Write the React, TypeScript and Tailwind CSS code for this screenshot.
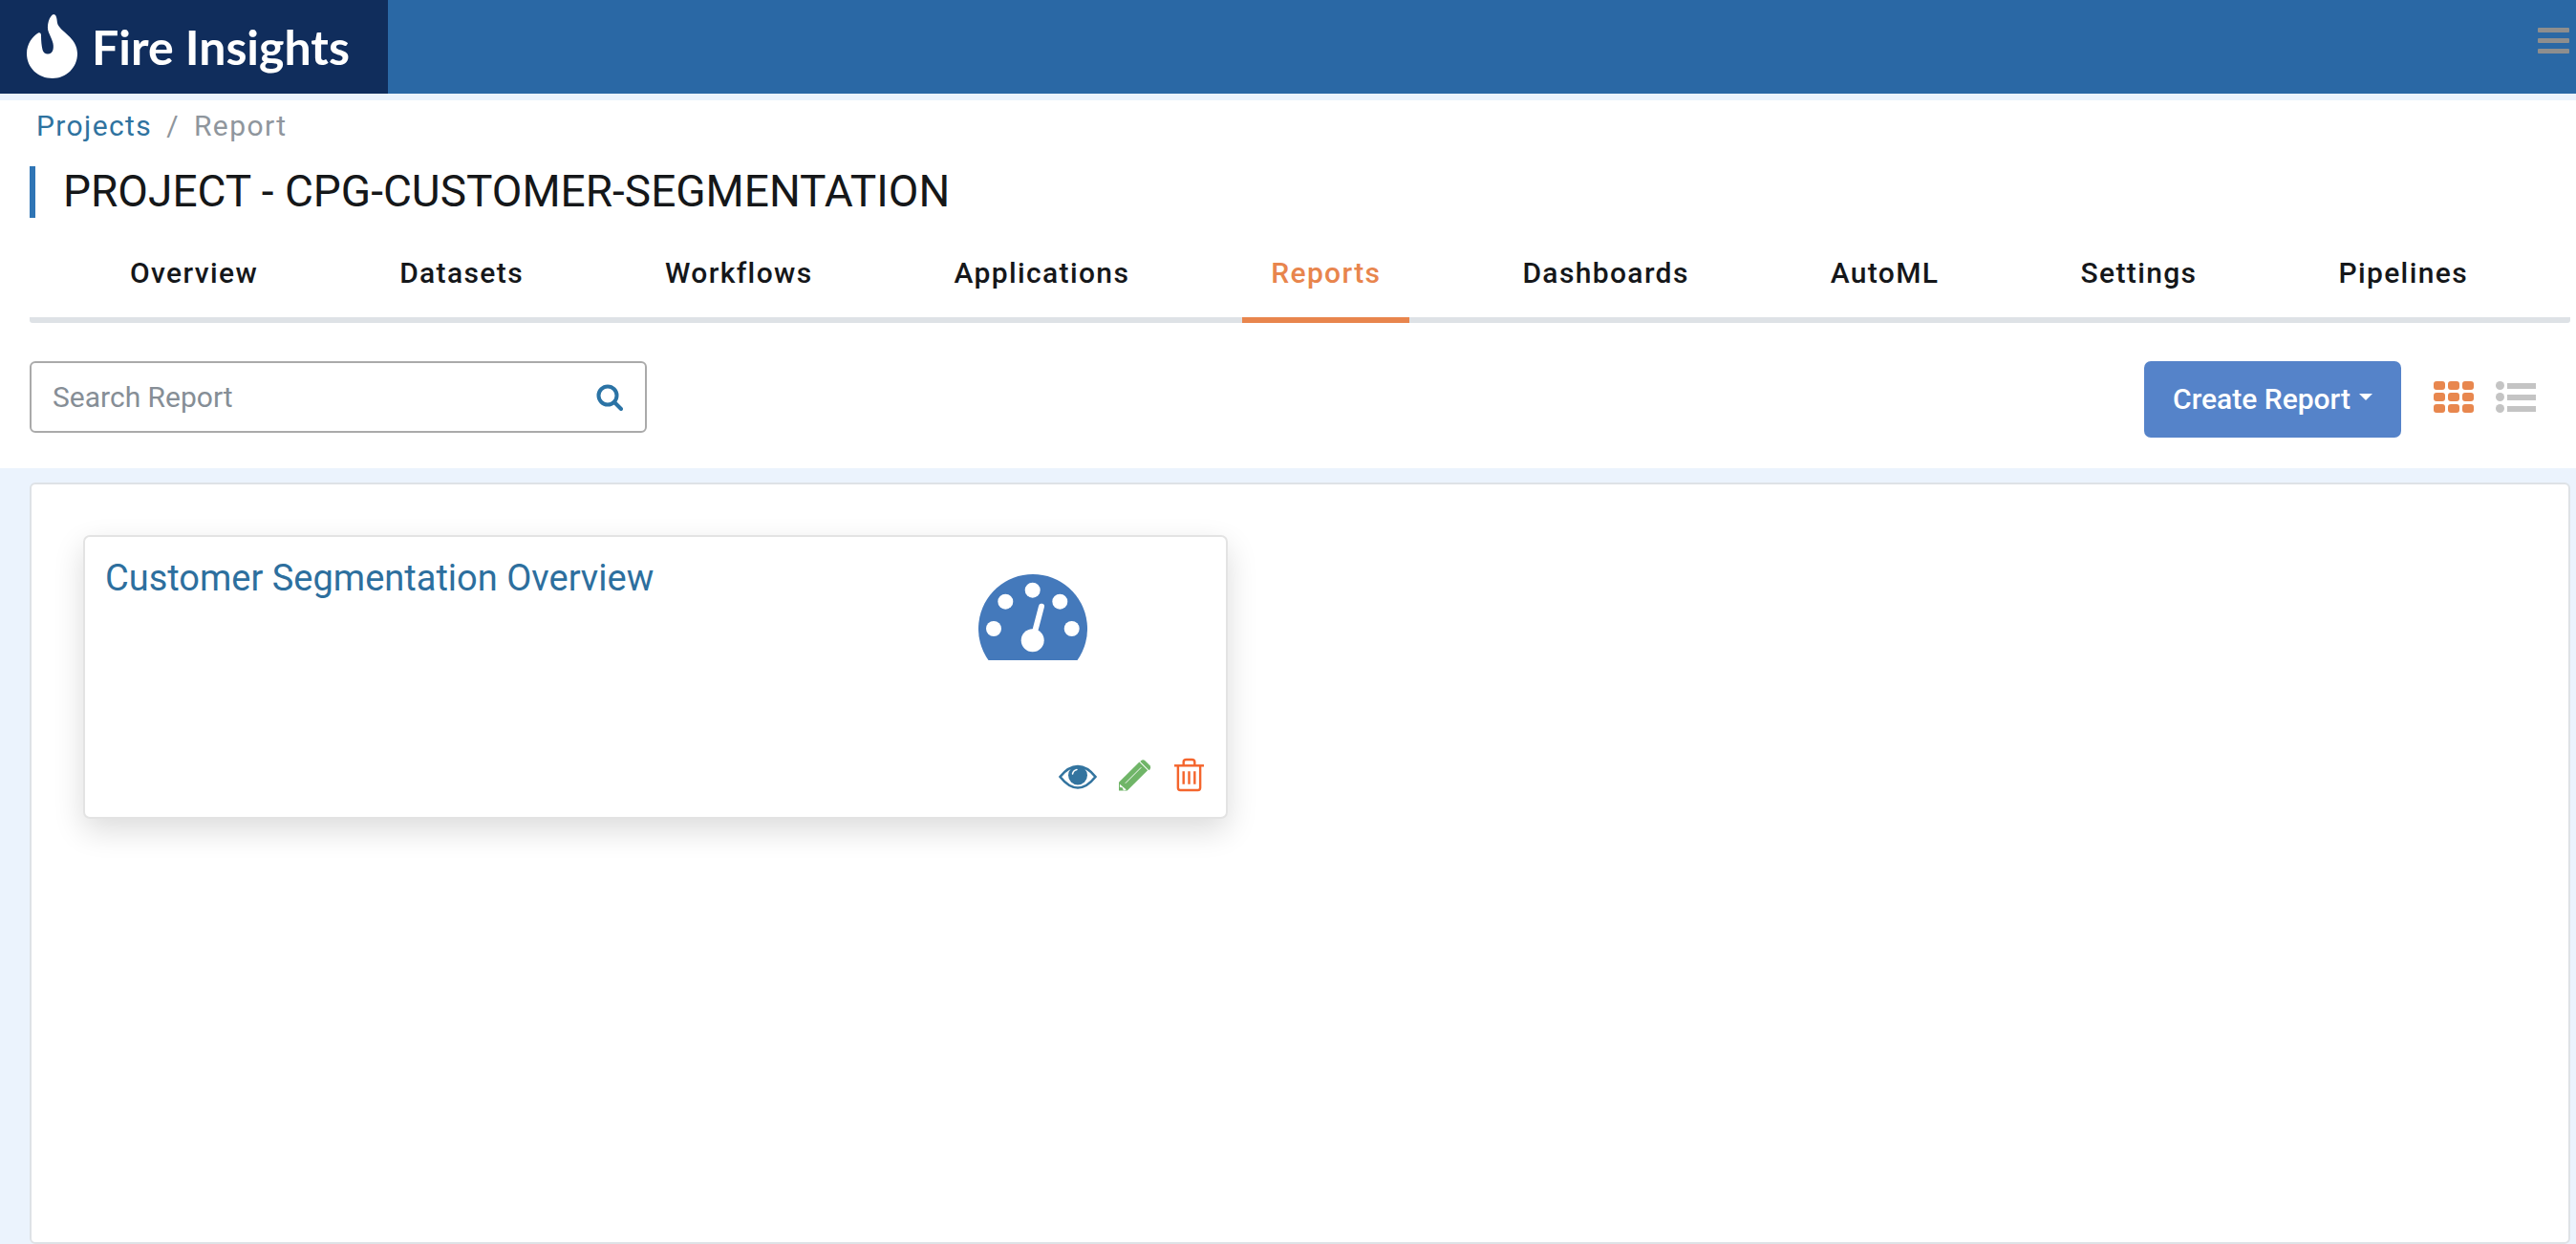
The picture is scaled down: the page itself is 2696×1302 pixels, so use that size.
const tabs = ['Overview', 'Datasets', 'Workflows', 'Applications', 'Reports', 'Dashboards', 'AutoML', 'Settings', 'Pipelines'];

const FlameLogo = () => (
  <svg width="54" height="68" viewBox="0 0 54 68" className="shrink-0">
    <path
      fill="#fff"
      d="M28 0C31 0 31.500 4 32 9C34 18 53 24 53 41C53 56 41 67 27 67C12 67 0 56 0 41C0 31 6 23 12 19.500C14 18.500 15 20 15 22C15 28 15.500 33 16.500 37C18 43 26 43 27.500 37C29 31 26 26 23 19C20 12 24 1 28 0Z"
    />
  </svg>
);

const GaugeIcon = () => (
  <svg width="114" height="90" viewBox="0 0 114 90">
    <path fill="#4479bb" d="M10.5 90A57 57 0 1 1 103.5 90Z" />
    <g fill="#fff">
      <circle cx="56.7" cy="16.7" r="8" />
      <circle cx="28.3" cy="28.7" r="8" />
      <circle cx="85.3" cy="28.7" r="8" />
      <circle cx="16" cy="57" r="8" />
      <circle cx="97.7" cy="57" r="8" />
      <circle cx="56.7" cy="69.3" r="12" />
    </g>
    <line x1="57" y1="68" x2="66" y2="33.7" stroke="#fff" strokeWidth="6" strokeLinecap="round" />
  </svg>
);

const EyeIcon = () => (
  <svg width="40" height="26" viewBox="0 0 40 26">
    <path fill="none" stroke="#33749f" strokeWidth="2.6" d="M1.5 13C7 6 13 2 20 2C27 2 33 6 38.500 13C33 20 27 24.500 20 24.500C13 24.500 7 20 1.500 13Z" />
    <circle cx="20" cy="11.500" r="10" fill="#33749f" />
    <path fill="none" stroke="#fff" strokeWidth="1.500" strokeLinecap="round" d="M14.500 10C15 7.500 16.500 6 19 5.500" />
  </svg>
);

const PencilIcon = () => (
  <svg width="34" height="35" viewBox="0 0 35 35">
    <path fill="#70b568" d="M0 25L22 3L31 12L9 34H0Z" />
    <path fill="#70b568" d="M24 1.500Q26 0 28 1.500L33.500 7Q35 9 33.500 11L32.500 12L23 2.500Z" />
    <path fill="none" stroke="#fff" strokeWidth="1" d="M7 26L24 9" />
    <path fill="#fff" d="M1 27L8 33L5 34L4 31L1 30Z" />
  </svg>
);

const TrashIcon = () => (
  <svg width="31" height="36" viewBox="0 0 32 36" fill="none" stroke="#f4652d" strokeWidth="2.500">
    <path d="M0 8H32" />
    <path d="M4 8V32Q4 34.500 6.500 34.500H25.500Q28 34.500 28 32V8" />
    <path d="M10 8V4Q10 1.500 13 1.500H19Q22 1.500 22 4V8" />
    <path d="M10 14V28M16 14V28M22 14V28" />
  </svg>
);

const App = () => {
  return (
    <div className="h-[1302px] overflow-hidden flex flex-col bg-[#ebf3fd] font-['Roboto',sans-serif]">
      <header className="h-[98px] shrink-0 flex bg-[#2a68a5]">
        <div className="w-[406px] shrink-0 flex items-center bg-[#102d5c] pl-[28px] pb-[1px]">
          <FlameLogo />
          <span className="ml-[14px] text-[50px] font-bold leading-none text-white font-['Lato',sans-serif] whitespace-nowrap">Fire Insights</span>
        </div>
        <div className="ml-auto mr-[7px] mt-[29px] flex flex-col gap-[6px]">
          <span className="block w-[33px] h-[5px] rounded-[1px] bg-[#8e8e8e]" />
          <span className="block w-[33px] h-[5px] rounded-[1px] bg-[#8e8e8e]" />
          <span className="block w-[33px] h-[5px] rounded-[1px] bg-[#8e8e8e]" />
        </div>
      </header>

      <section className="mt-[7px] h-[385px] shrink-0 bg-white pl-[31px] pr-[6px]">
        <div className="pl-[7px] pt-[8px] text-[30px] leading-[38px] tracking-[1.4px]">
          <span className="text-[#2f739f]">Projects</span>
          <span className="mx-[15px] text-[#8f969d]">/</span>
          <span className="text-[#8f969d]">Report</span>
        </div>
        <h1 className="mt-[23px] h-[54px] border-l-[6px] border-[#2f75b5] pl-[29px] text-[46px] leading-[52px] text-[#151719] whitespace-nowrap">
          PROJECT - CPG-CUSTOMER-SEGMENTATION
        </h1>
        <nav className="mt-[38px] h-[72px] flex gap-[88px] pl-[75px] border-b-[6px] border-[#dee2e6] rounded-b-[3px]">
          {tabs.map((tab) => (
            <div
              key={tab}
              className={`h-[72px] px-[30px] pt-[3px] text-[30px] leading-[34px] tracking-[1.37px] font-medium whitespace-nowrap ${
                tab === 'Reports' ? 'text-[#e8854d] border-b-[6px] border-[#e8854d]' : 'text-[#15171a]'
              }`}
            >
              {tab}
            </div>
          ))}
        </nav>
        <div className="mt-[40px] flex items-start">
          <div className="w-[646px] h-[75px] flex items-center border-2 border-[#aaaaaa] rounded-[6px] pl-[22px] pr-[23px]">
            <span className="text-[30px] text-[#868e96]">Search Report</span>
            <svg className="ml-auto" width="28" height="28" viewBox="0 0 28 28" fill="none" stroke="#2b73a5" strokeWidth="4" strokeLinecap="round">
              <circle cx="12" cy="12" r="9.500" />
              <path d="M19 19L26 26" />
            </svg>
          </div>
          <button className="ml-auto w-[269px] h-[80px] pb-[2px] flex items-center justify-center rounded-[7px] bg-[#5583c9] text-[30px] font-medium text-white">
            Create Report
            <span className="ml-[9px] mb-[4px] w-0 h-0 border-x-[7px] border-x-transparent border-t-[7px] border-t-white" />
          </button>
          <div className="ml-[34px] mr-[36px] mt-[21px] flex gap-[23px]">
            <div className="grid grid-cols-3 gap-[3px] w-[42px]">
              {[0, 1, 2, 3, 4, 5, 6, 7, 8].map((i) => (
                <span key={i} className="h-[9px] rounded-[3px] bg-[#e8874e]" />
              ))}
            </div>
            <div className="flex flex-col gap-[3px] w-[42px]">
              {[0, 1, 2].map((i) => (
                <div key={i} className="flex items-center gap-[3px]">
                  <span className="w-[9px] h-[9px] rounded-full bg-[#c4c4c4]" />
                  <span className="flex-1 h-[6px] bg-[#c4c4c4]" />
                </div>
              ))}
            </div>
          </div>
        </div>
      </section>

      <main className="mt-[15px] ml-[31px] mr-[6px] flex-1 bg-white border-2 border-[#dee2e6] rounded-[6px] pl-[54px] pt-[53px]">
        <div className="w-[1198px] h-[297px] flex flex-col bg-white border-2 border-[#e3e3e3] rounded-[7px] shadow-[0_12px_32px_rgba(0,0,0,0.14)]">
          <div className="flex justify-between">
            <h2 className="ml-[21px] mt-[21px] text-[38px] leading-[44px] text-[#2d6f9e]">Customer Segmentation Overview</h2>
            <div className="mr-[145px] mt-[39px]">
              <GaugeIcon />
            </div>
          </div>
          <div className="mt-auto mb-[26px] mr-[23px] flex items-end justify-end">
            <div className="mb-[3px]"><EyeIcon /></div>
            <div className="ml-[23px]"><PencilIcon /></div>
            <div className="ml-[24px]"><TrashIcon /></div>
          </div>
        </div>
      </main>
    </div>
  );
};

export default App;
